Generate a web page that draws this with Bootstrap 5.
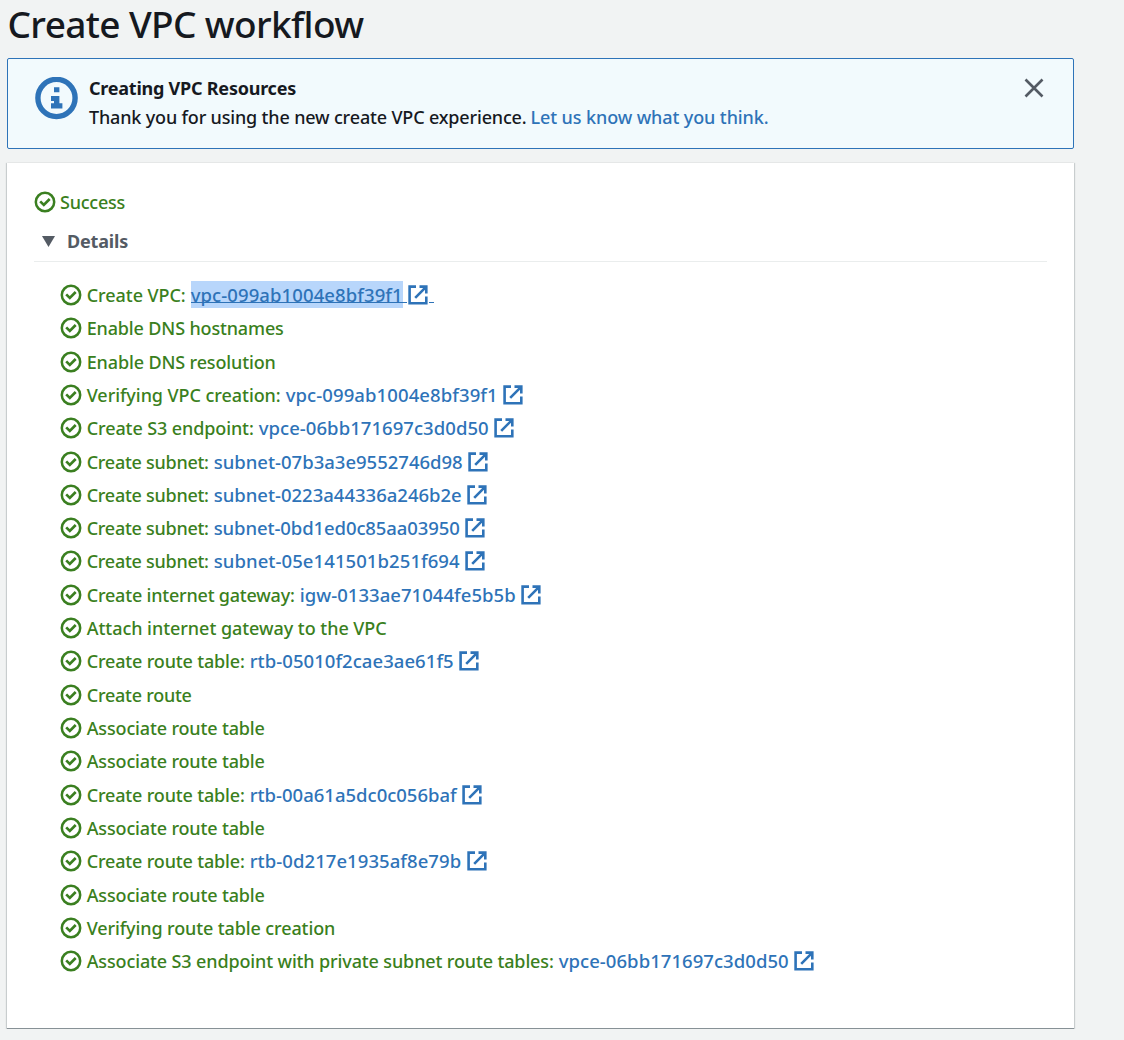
<!DOCTYPE html>
<html lang="en">
<head>
<meta charset="utf-8">
<meta name="viewport" content="width=device-width, initial-scale=1">
<title>Create VPC workflow</title>
<link href="https://cdn.jsdelivr.net/npm/bootstrap@5.3.0/dist/css/bootstrap.min.css" rel="stylesheet">
<style>
body{background:#f1f3f3;color:#16191f;font-family:"Noto Sans",sans-serif;font-size:18px;line-height:28px;font-weight:500;overflow:hidden}
.page-wrap{width:1067px;margin-left:7px}
.page-title{font-size:37px;line-height:48px;font-weight:500;height:58px;padding-left:.500px}
.flash{height:91px;border:1px solid #2e73b8;border-radius:2px;background:#f2fafd;padding:16px 29px 0 27px;color:#16191f}
.flash-icon{width:43px;height:43px;margin-top:1.500px;margin-right:11px}
.flash-head{line-height:26px;height:28px}
.flash-link,.res-link{color:#2e73b8;text-decoration:none}
.res-link{font-size:18.5px}
.flash-close{width:20px;height:20px;margin-top:3px}
.panel{height:866px;margin-top:14px;background:#fff;padding:25px 27px 0;border-bottom:1px solid #879196;box-shadow:0 1px 1px 0 rgba(0,28,36,.15),1px 0 1px 0 rgba(0,28,36,.15),-1px 0 1px 0 rgba(0,28,36,.15)}
.ok-text{color:#3a7f20}
.check-icon{width:22px;height:22px;flex:none}
.status-row .check-icon{margin:-1px .500px 0 -.500px}
.details-head{height:46px;padding-top:5px;border-bottom:1px solid #eaeded;color:#545b64;font-weight:700}
.caret-icon{width:13px;height:11px;margin-left:8px;margin-right:12px}
.step-list{padding:16.300px 0 0 26px}
.step-row{height:33.32px;gap:5px}
.step-row .check-icon{margin-right:-.300px}
.fit{display:inline-block;white-space:nowrap}
.ext-icon{width:20px;height:20px;flex:none;margin-left:.600px}
.picked{position:relative;background:#b8d6fb;height:27px;line-height:27px}
/* underline of the hovered link, carried on past the text around its icon */
.picked::before,.picked::after{content:"";position:absolute;bottom:5px;height:1px;background:#2e73b8}
.picked::before{left:0;width:216px}
.picked::after{left:238px;width:5px}
</style>
<script src="https://cdn.jsdelivr.net/npm/bootstrap@5.3.0/dist/js/bootstrap.bundle.min.js"></script>
</head>
<body>
<svg class="d-none">
<symbol id="check" viewBox="0 0 22 22"><circle cx="11" cy="11" r="9.200" fill="none" stroke="#3a7f20" stroke-width="2.500"/><path d="M6.200 10.400l3.600 3.500 5.900-5.900" fill="none" stroke="#3a7f20" stroke-width="2.700"/></symbol>
<symbol id="ext" viewBox="0 0 20 20"><path d="M8 1.600H1.600v16.700h16.700V11.500M7.200 12.800L17.600 2.400M11.500 1.600h6.800v6.900" fill="none" stroke="#2e73b8" stroke-width="2.600"/></symbol>
</svg>
<main class="page-wrap">
<h1 class="page-title mb-0"><span class="fit" data-w="356">Create VPC workflow</span></h1>
<div class="flash d-flex align-items-start">
<svg class="flash-icon" viewBox="0 0 43 43"><circle cx="21.500" cy="21" r="18.600" fill="none" stroke="#2e73b8" stroke-width="5.400"/><path d="M19 10.300h5.400v5H19zM16 19h8.400v7.300h3v5.200H16v-5.200h3V24h-3z" fill="#2e73b8"/></svg>
<div class="flex-grow-1"><div class="flash-head fw-bold"><span class="fit" data-w="207">Creating VPC Resources</span></div>
<div><span class="fit" data-w="437.500">Thank you for using the new create VPC experience.</span><a class="flash-link fit ms-1" href="#" data-w="238">Let us know what you think.</a></div></div>
<svg class="flash-close" viewBox="0 0 20 20"><path d="M1.500 1.500l17 17M18.500 1.500l-17 17" stroke="#545b64" stroke-width="2.600"/></svg>
</div>
<section class="panel">
<div class="status-row d-flex align-items-center ok-text"><svg class="check-icon"><use href="#check"/></svg><span class="fit ms-1" data-w="65">Success</span></div>
<div class="details-head d-flex align-items-center"><svg class="caret-icon" viewBox="0 0 13 11"><path d="M0 0h13L6.500 11z" fill="#545b64"/></svg><span class="fit" data-w="61">Details</span></div>
<div class="step-list" id="steps"></div>
</section>
</main>
<script>
// label, label width, resource id, id width
const steps=[
["Create VPC:",99,"vpc-099ab1004e8bf39f1",212],
["Enable DNS hostnames",197],
["Enable DNS resolution",189],
["Verifying VPC creation:",194,"vpc-099ab1004e8bf39f1",212],
["Create S3 endpoint:",167,"vpce-06bb171697c3d0d50",230],
["Create subnet:",122,"subnet-07b3a3e9552746d98",249],
["Create subnet:",122,"subnet-0223a44336a246b2e",248],
["Create subnet:",122,"subnet-0bd1ed0c85aa03950",246],
["Create subnet:",122,"subnet-05e141501b251f694",246],
["Create internet gateway:",208,"igw-0133ae71044fe5b5b",216],
["Attach internet gateway to the VPC",300],
["Create route table:",158,"rtb-05010f2cae3ae61f5",204],
["Create route",105],
["Associate route table",178],
["Associate route table",178],
["Create route table:",158,"rtb-00a61a5dc0c056baf",207],
["Associate route table",178],
["Create route table:",158,"rtb-0d217e1935af8e79b",211.5],
["Associate route table",178],
["Verifying route table creation",248.5],
["Associate S3 endpoint with private subnet route tables:",467,"vpce-06bb171697c3d0d50",230]];
document.getElementById("steps").innerHTML=steps.map(([t,w,id,iw],i)=>
`<div class="step-row d-flex align-items-center ok-text"><svg class="check-icon"><use href="#check"/></svg><span class="fit" data-w="${w}">${t}</span>`+
(id?`<a class="res-link fit${i?"":" picked"}" href="#" data-w="${iw}">${id}</a><svg class="ext-icon"><use href="#ext"/></svg>`:"")+`</div>`).join("");
// track each run so that it fills its width
document.querySelectorAll(".fit").forEach(e=>{
const w=+e.dataset.w,n=e.textContent.length;
e.style.letterSpacing=(w-e.getBoundingClientRect().width)/n+"px";
e.style.width=w+"px";
});
</script>
</body>
</html>
